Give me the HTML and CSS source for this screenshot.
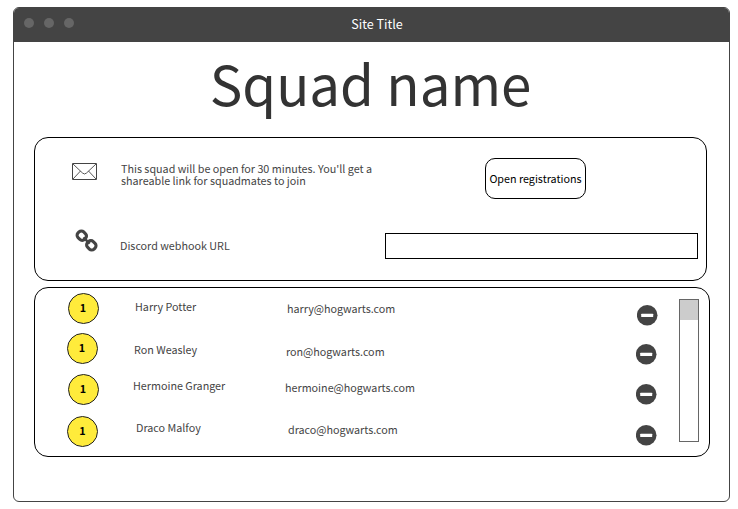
FILE: index.html
```html
<!DOCTYPE html>
<html lang="en">
<head>
<meta charset="utf-8">
<title>Squad name</title>
<link rel="stylesheet" href="styles.css">
</head>
<body>
<div class="window">
  <header class="titlebar">
    <span class="dots"><i class="dot"></i><i class="dot"></i><i class="dot"></i></span>
    <span class="site-title">Site Title</span>
  </header>
  <main class="content">
    <h1 class="heading">Squad name</h1>
    <section class="panel settings">
      <div class="setting open-row">
        <svg class="mail" width="26" height="18" viewBox="0 0 26 18" fill="none" stroke="#444">
          <path d="M.5.5H24.5V16.5H.5Z"/>
          <path d="M1 1L10.5 10Q12.5 12 14.5 10L24 1M1 16L8.5 8M24 16L16.5 8" stroke-width=".9"/>
        </svg>
        <p class="description">This squad will be open for 30 minutes. You'll get a<br>shareable link for squadmates to join</p>
        <button class="open-button">Open registrations</button>
      </div>
      <div class="setting webhook-row">
        <svg class="link" width="24" height="24" viewBox="0 0 24 24" fill="none" stroke="#444" stroke-width="3.1">
          <rect x="-4.6" y="-4" width="9.2" height="8" rx="3.3" transform="translate(6.8 6.7) rotate(45)"/>
          <rect x="-4.6" y="-4" width="9.2" height="8" rx="3.3" transform="translate(16.3 16.3) rotate(45)"/>
          <path d="M8.4 8.4L14.7 14.7" stroke-width="2.6"/>
        </svg>
        <label class="webhook-label" for="webhook">Discord webhook URL</label>
        <input class="webhook" id="webhook" type="text">
      </div>
    </section>
    <section class="panel members">
      <div class="list">
        <div class="member harry">
          <span class="badge">1</span><span class="name">Harry Potter</span><span class="email">harry@hogwarts.com</span>
          <svg class="remove" width="21" height="21" viewBox="0 0 21 21"><circle cx="10.2" cy="10.3" r="10.3" fill="#444"/><rect x="4.2" y="8.7" width="12" height="3.3" rx=".6" fill="#fff"/></svg>
        </div>
        <div class="member ron">
          <span class="badge">1</span><span class="name">Ron Weasley</span><span class="email">ron@hogwarts.com</span>
          <svg class="remove" width="21" height="21" viewBox="0 0 21 21"><circle cx="10.2" cy="10.3" r="10.3" fill="#444"/><rect x="4.2" y="8.7" width="12" height="3.3" rx=".6" fill="#fff"/></svg>
        </div>
        <div class="member hermoine">
          <span class="badge">1</span><span class="name">Hermoine Granger</span><span class="email">hermoine@hogwarts.com</span>
          <svg class="remove" width="21" height="21" viewBox="0 0 21 21"><circle cx="10.2" cy="10.3" r="10.3" fill="#444"/><rect x="4.2" y="8.7" width="12" height="3.3" rx=".6" fill="#fff"/></svg>
        </div>
        <div class="member draco">
          <span class="badge">1</span><span class="name">Draco Malfoy</span><span class="email">draco@hogwarts.com</span>
          <svg class="remove" width="21" height="21" viewBox="0 0 21 21"><circle cx="10.2" cy="10.3" r="10.3" fill="#444"/><rect x="4.2" y="8.7" width="12" height="3.3" rx=".6" fill="#fff"/></svg>
        </div>
      </div>
      <div class="scrollbar"><div class="thumb"></div></div>
    </section>
  </main>
</div>
</body>
</html>
```
FILE: styles.css
```css
* { box-sizing: border-box; }
body {
  margin: 0;
  padding: 7px 8px 7px 13px;
  height: 509px;
  overflow: hidden;
  background: #fff;
  color: #444;
  font: 10.76px/12px "Noto Sans CJK JP", "Noto Sans", sans-serif;
}
.window {
  height: 495px;
  border: 1px solid #444;
  border-radius: 6px;
  overflow: hidden;
}
.titlebar {
  display: grid;
  grid-template-columns: 100px 1fr 88px;
  align-items: center;
  height: 34px;
  background: #444;
}
.dots { display: flex; gap: 10px; padding: 0 0 4px 10.4px; }
.dot { width: 10px; height: 10px; border-radius: 50%; background: #666; }
.site-title { margin-right: 1px; text-align: center; color: #fff; font-size: 12.6px; line-height: 30px; padding-bottom: 2px; }
.content { padding: 0 19px 0 20px; }
.heading {
  margin: 0 3px 0 0;
  height: 95px;
  text-align: center;
  color: #333;
  font-size: 54.7px;
  font-weight: 400;
  line-height: 81px;
}
.panel { border: 1px solid #000; border-radius: 14px; }
.settings { width: 673px; height: 144px; }
.setting { display: flex; align-items: flex-start; }
.open-row { height: 91px; padding: 20px 0 0 37px; }
.mail { margin-top: 5px; }
.description { width: 364px; margin: 5px 0 0 23px; }
.open-button {
  width: 101px;
  height: 41px;
  padding: 0;
  border: 1px solid #000;
  border-radius: 10px;
  background: #fff;
  color: #000;
  font: inherit;
  white-space: nowrap;
}
.webhook-row { padding: 0 0 0 40px; }
.link { margin-top: 0; }
.webhook-label { width: 265px; margin: 11px 0 0 21px; }
.webhook { width: 313px; height: 26px; margin-top: 4px; border: 1px solid #000; background: #fff; font: inherit; }
.members { display: flex; width: 676px; height: 170px; margin-top: 6px; }
.list { width: 644px; padding: 5px 0 0 33px; }
.member { display: grid; grid-template-columns: 67px 152px 350px 21px; align-items: start; }
.badge {
  width: 31px;
  height: 31px;
  border: 1px solid #222;
  border-radius: 50%;
  background: #ffeb3b;
  color: #000;
  font-weight: 700;
  line-height: 27px;
  padding-right: 1px;
  text-align: center;
}
.name { margin-top: 8px; white-space: nowrap; }
.email { margin-top: 10px; }
.remove { margin-top: 12px; }
.harry { height: 40px; }
.ron { height: 41px; margin-left: -1px; }
.ron .name { margin-top: 11px; }
.ron .email { margin-top: 13px; }
.ron .remove { margin-top: 11px; }
.hermoine { height: 42px; grid-template-columns: 65px 152px 351px 21px; }
.hermoine .name { margin-top: 6px; }
.hermoine .email { margin-top: 8px; }
.hermoine .remove { margin-top: 10px; }
.draco { grid-template-columns: 68px 152px 348px 21px; }
.draco .badge { margin-left: -.6px; }
.draco .name { margin-top: 6px; }
.draco .email { margin-top: 8px; }
.draco .remove { margin-top: 9px; }
.scrollbar { width: 20px; height: 143px; margin-top: 11px; border: 1px solid #666; }
.thumb { height: 20px; background: #ccc; }
```
